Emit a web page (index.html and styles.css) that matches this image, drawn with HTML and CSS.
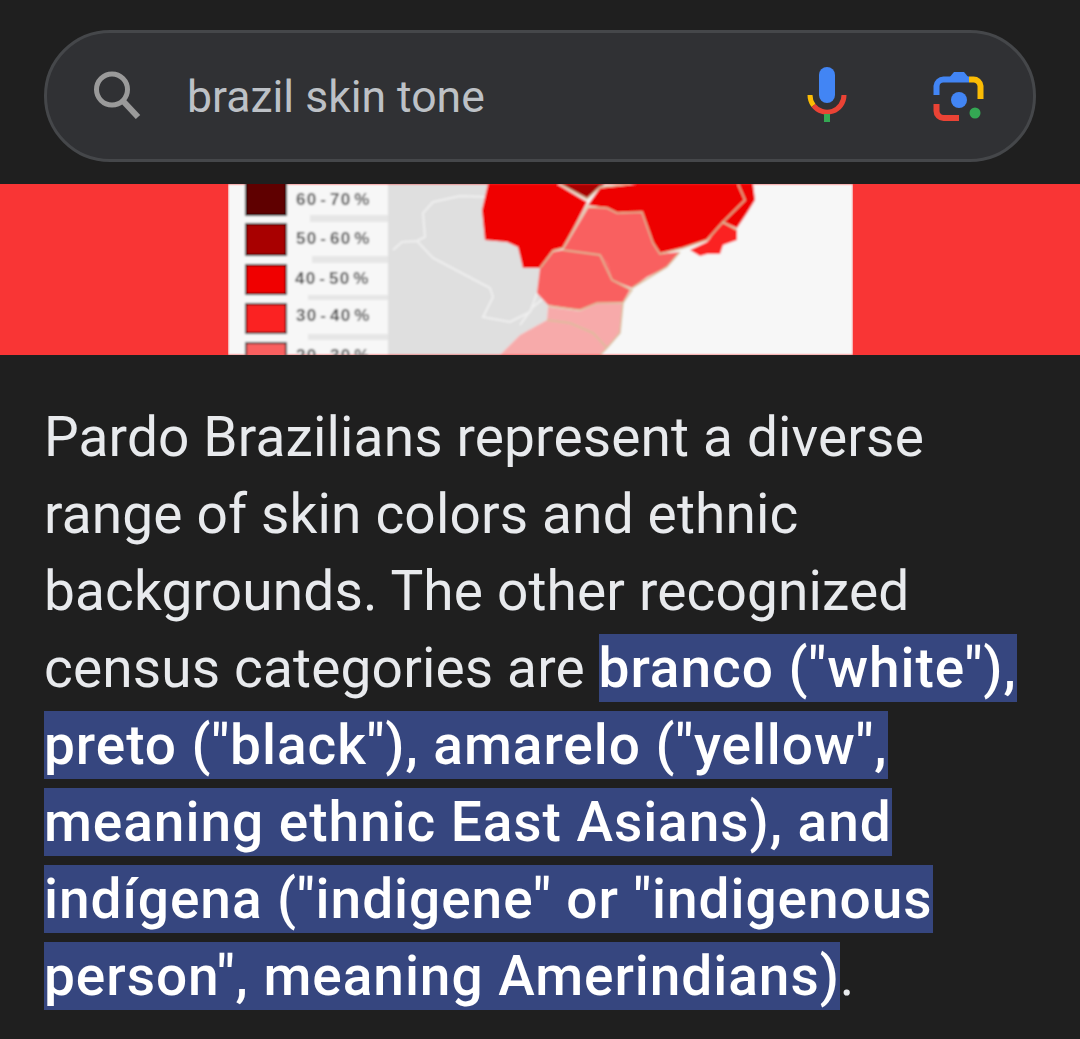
FILE: index.html
```html
<!DOCTYPE html>
<html lang="en">
<head>
  <meta charset="UTF-8" />
  <title>brazil skin tone</title>
  <link rel="stylesheet" href="styles.css">
</head>
<body>

<header class="top">
  <div class="search">
    <svg class="icon-search" viewBox="0 0 48 48" width="48" height="48">
      <circle cx="19" cy="18.500" r="15.500" fill="none" stroke="#9a9a9a" stroke-width="5"/>
      <path d="M30 30 L45 46" fill="none" stroke="#9a9a9a" stroke-width="6"/>
    </svg>
    <span class="query">brazil skin tone</span>
    <svg class="icon-mic" viewBox="0 0 40 56" width="40" height="56">
      <rect x="12" y="0" width="16" height="36" rx="8" fill="#4285f4"/>
      <path d="M3 28 A17 17 0 0 0 6.500 38.500" fill="none" stroke="#fbbc04" stroke-width="5"/>
      <path d="M6.500 38.500 A17 17 0 0 0 37 28" fill="none" stroke="#ea4335" stroke-width="5"/>
      <rect x="17" y="47" width="6" height="8" fill="#34a853"/>
    </svg>
    <svg class="icon-lens" viewBox="0 0 52 52" width="52" height="52">
      <path d="M3.500 24 V15 A7 7 0 0 1 10.500 8.500 H36" fill="none" stroke="#4285f4" stroke-width="6"/>
      <path d="M16 7 L21 1 H31 L36 7 Z" fill="#4285f4"/>
      <path d="M36 8.500 H40 A7 7 0 0 1 47.500 15 V28" fill="none" stroke="#fbbc04" stroke-width="6"/>
      <path d="M3.500 33 V40 A7 7 0 0 0 10.500 47 H26" fill="none" stroke="#ea4335" stroke-width="6"/>
      <circle cx="26" cy="29" r="8" fill="#4285f4"/>
      <circle cx="42" cy="42" r="5.500" fill="#34a853"/>
    </svg>
  </div>
</header>

<div class="hero">
  <svg class="map" viewBox="228 184 625 171" width="625" height="171">
    <defs>
      <filter id="soft"><feGaussianBlur stdDeviation="0.8"/></filter>
    </defs>
    <g filter="url(#soft)">
      <rect x="228" y="184" width="625" height="171" fill="#f7f7f7"/>
      <path d="M388 184 H488 L482 210 L485 240 L507 242 L518 247 L523 268 L540 268 L537 293 L548 305 L547 320 L520 335 L500 355 H388 Z" fill="#dfdfdf"/>
      <path d="M310 215 H388 V222 H310 Z M312 256 H388 V263 H312 Z M308 295 H388 V300 H308 Z M308 334 H388 V340 H308 Z" fill="#e6e6e6"/>
      <path d="M393 250 L402 242 L417 241 L433 258 L490 288 L493 297 L483 317 L510 322 L530 312 L537 293 M417 241 L425 237 L423 213 L433 202 L460 196 L487 197 M520 325 L533 307 L545 297" fill="none" stroke="#efefef" stroke-width="2"/>

      <path d="M488 184 L482 210 L485 240 L507 242 L518 247 L523 268 L540 268 L553 250 L563 248 L583 210 L587 202 L557 184 Z" fill="#f00000"/>
      <path d="M560 184 L587 198 L600 187 L605 184 Z" fill="#a80000"/>
      <path d="M588 205 L600 188 L637 184 H753 L755 200 L747 213 L737 228 L723 222 L720 230 L707 240 L683 248 L660 253 L653 243 L648 230 L642 212 L617 213 L607 208 Z" fill="#ee0000"/>
      <path d="M723 223 L737 230 L737 240 L723 245 L720 254 L707 254 L700 256 L690 250 L707 242 Z" fill="#fb2020"/>
      <path d="M588 208 L607 208 L617 213 L642 212 L648 230 L653 243 L660 254 L680 252 L667 267 L647 277 L632 288 L612 280 L607 263 L600 255 L563 250 Z" fill="#f96060"/>
      <path d="M553 252 L563 250 L600 255 L607 263 L612 280 L630 290 L623 302 L597 303 L580 310 L548 305 L537 293 L540 268 Z" fill="#f96060"/>
      <path d="M548 307 L580 311 L597 303 H623 L620 333 L607 348 L593 333 L570 323 L547 320 Z" fill="#f7aaaa"/>
      <path d="M500 355 L520 335 L547 320 L570 323 L593 333 L607 348 L600 355 Z" fill="#f7aaaa"/>
      <path d="M588 205 L563 248 L553 251 L540 268 M588 207 L607 208 L617 213 L642 212 L653 243 L660 254 L683 248 L707 240 L723 222 L737 230 M563 250 L600 255 L612 280 L632 290 L623 303 L597 303 L580 310 L548 306 M547 320 L570 323 L593 333 L607 348 L600 355 M623 303 L620 333 L607 348 M560 184 L587 199 L600 187 L630 184 M738 184 L745 200 L723 222 M680 252 L667 267 L632 288" fill="none" stroke="#d8bf9a" stroke-width="1.500"/>

      <rect x="246" y="180" width="40" height="35" fill="#5e0000" stroke="#111" stroke-width="2"/>
      <rect x="246" y="224" width="40" height="31" fill="#a80000" stroke="#111" stroke-width="2"/>
      <rect x="246" y="265" width="40" height="29" fill="#f00000" stroke="#111" stroke-width="2"/>
      <rect x="246" y="304" width="40" height="29" fill="#fb2020" stroke="#111" stroke-width="2"/>
      <rect x="246" y="343" width="40" height="20" fill="#f96060" stroke="#333" stroke-width="2"/>

      <g class="legend-text">
        <text x="296" y="205">60 - 70 %</text>
        <text x="296" y="244">50 - 60 %</text>
        <text x="295" y="284">40 - 50 %</text>
        <text x="296" y="321">30 - 40 %</text>
        <text x="296" y="361">20 - 30 %</text>
      </g>
    </g>
  </svg>
</div>

<p class="answer">Pardo Brazilians represent a diverse range of skin colors and ethnic backgrounds. The other recognized census categories are <mark>branco ("white"), preto ("black"), amarelo ("yellow", meaning ethnic East Asians), and indígena ("indigene" or "indigenous person", meaning Amerindians)</mark>.</p>

</body>
</html>
```

FILE: styles.css
```css
body {
  margin: 0;
  background: #1f1f1f;
  color: #e8eaed;
  font-family: Roboto, "Noto Sans", sans-serif;
  height: 1039px;
  overflow: hidden;
}
.top {
  height: 184px;
  padding: 30px 44px 0;
  box-sizing: border-box;
}
.search {
  display: flex;
  align-items: center;
  height: 132px;
  box-sizing: border-box;
  background: #303134;
  border: 3px solid #45474a;
  border-radius: 66px;
  padding: 0 48px 0 46px;
}
.icon-search {
  flex: none;
  margin-top: -3px;
}
.query {
  flex: 1;
  margin-left: 46px;
  font-size: 44.500px;
  color: #bdc1c6;
  margin-top: 2px;
}
.icon-mic {
  flex: none;
  margin-right: 86px;
  margin-top: -2px;
}
.icon-lens {
  flex: none;
  margin-top: 1px;
}
.hero {
  display: flex;
  justify-content: center;
  height: 171px;
  background: #f93535;
  overflow: hidden;
}
.map {
  display: block;
}
.legend-text {
  font-family: "Liberation Sans", sans-serif;
  font-size: 17px;
  font-weight: bold;
  letter-spacing: 1.200px;
  word-spacing: -3px;
  fill: #505050;
}
.answer {
  margin: 44px 40px 0 44px;
  font-size: 55px;
  line-height: 77px;
  letter-spacing: 0.150px;
}
mark {
  background: #36467f;
  color: #fff;
  padding: 2px 0;
  font-weight: 500;
  letter-spacing: 0.950px;
}
```
